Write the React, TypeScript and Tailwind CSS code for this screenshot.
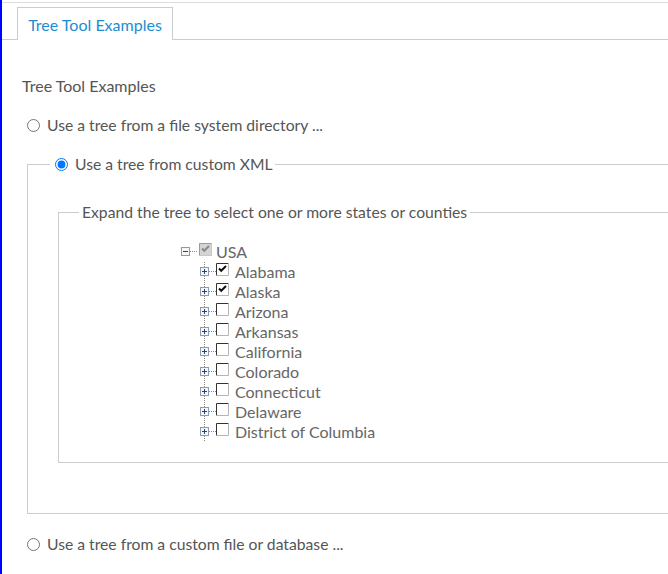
import React from "react";

const states = [
    { name: "Alabama", checked: true },
    { name: "Alaska", checked: true },
    { name: "Arizona", checked: false },
    { name: "Arkansas", checked: false },
    { name: "California", checked: false },
    { name: "Colorado", checked: false },
    { name: "Connecticut", checked: false },
    { name: "Delaware", checked: false },
    { name: "District of Columbia", checked: false },
];

const Expander = ({ open, trunk }: { open: boolean; trunk: boolean }) => (
    <svg width="20" height="20" className="shrink-0">
        {trunk && (
            <line x1="8.5" y1="0" x2="8.5" y2="20" stroke="#888" strokeDasharray="1 1" />
        )}
        <line x1="13" y1="9.5" x2="20" y2="9.5" stroke="#888" strokeDasharray="1 1" />
        <rect x="4.5" y="5.5" width="8" height="8" fill="#f4f6f8" stroke="#8d9bb0" />
        <line x1="6" y1="9.5" x2="11" y2="9.5" stroke="#23408e" />
        {!open && <line x1="8.5" y1="7" x2="8.5" y2="12" stroke="#23408e" />}
    </svg>
);

const TreeCheck = ({ checked, grayed }: { checked: boolean; grayed?: boolean }) => (
    <svg width="13" height="13" className="shrink-0 mt-[1px]">
        <rect x="0" y="0" width="13" height="13" fill={grayed ? "#d4d4d4" : "#fff"} />
        <path d="M0.5 12.5 V0.5 H12.5" fill="none" stroke={grayed ? "#9a9a9a" : "#333"} />
        <path d="M12.5 0.5 V12.5 H0.5" fill="none" stroke={grayed ? "#c8c8c8" : "#b5b5b5"} />
        {checked && (
            <path
                d="M3 5.5 L5.2 7.8 L10 3"
                fill="none"
                stroke={grayed ? "#8a8a8a" : "#111"}
                strokeWidth="2"
            />
        )}
    </svg>
);

const Radio = ({ checked }: { checked?: boolean }) => (
    <input
        type="radio"
        defaultChecked={checked}
        className="m-0 ml-[5px] mr-[3px] w-[13px] h-[13px] shrink-0"
    />
);

export default function App() {
    return (
        <div className="h-[574px] w-full overflow-hidden bg-white border-l-2 border-[#0000ff] pt-[2px] font-['Lato',sans-serif] text-[16px] text-[#555]">
            <div className="border-t border-[#dcdcdc] pt-[4px]">
                <div className="flex border-b border-[#ccc] pl-[15px]">
                    <div className="w-[156px] h-[33px] -mb-px bg-white border border-b-0 border-[#ccc] flex items-center justify-center pt-[2px] text-[#1b8dd2]">
                        Tree Tool Examples
                    </div>
                </div>
            </div>

            <div className="pl-[20px]">
                <div className="mt-[36px] leading-[20px]">Tree Tool Examples</div>

                <label className="mt-[19px] flex items-center h-[20px] leading-[20px] text-[15.7px]">
                    <Radio />
                    <span className="ml-[4px]">Use a tree from a file system directory ...</span>
                </label>

                <fieldset className="mt-[19px] ml-[5px] w-[700px] border border-[#ccc] pl-[22px] pb-[50px]">
                    <legend className="pr-[2px]">
                        <label className="flex items-center h-[20px] leading-[20px] text-[15.7px]">
                            <Radio checked />
                            <span className="ml-[4px]">Use a tree from custom XML</span>
                        </label>
                    </legend>

                    <fieldset className="mt-[28px] ml-[8px] w-[640px] border border-[#ccc] pl-[20px] pb-[20px]">
                        <legend className="px-[3px] leading-[20px] h-[20px] text-[15.7px]">
                            Expand the tree to select one or more states or counties
                        </legend>

                        <div className="mt-[20px] ml-[98px] text-[#666] leading-[20px]">
                            <div className="flex items-start h-[20px]">
                                <Expander open trunk={false} />
                                <span className="ml-[2px] flex">
                                    <TreeCheck checked grayed />
                                </span>
                                <span className="ml-[4px]">USA</span>
                            </div>
                            <div className="ml-[19px]">
                                {states.map((s) => (
                                    <div key={s.name} className="flex items-start h-[20px]">
                                        <Expander open={false} trunk />
                                        <TreeCheck checked={s.checked} />
                                        <span className="ml-[6px]">{s.name}</span>
                                    </div>
                                ))}
                            </div>
                        </div>
                    </fieldset>
                </fieldset>

                <label className="mt-[20px] flex items-center h-[20px] leading-[20px] text-[15.7px]">
                    <Radio />
                    <span className="ml-[4px]">Use a tree from a custom file or database ...</span>
                </label>
            </div>
        </div>
    );
}
